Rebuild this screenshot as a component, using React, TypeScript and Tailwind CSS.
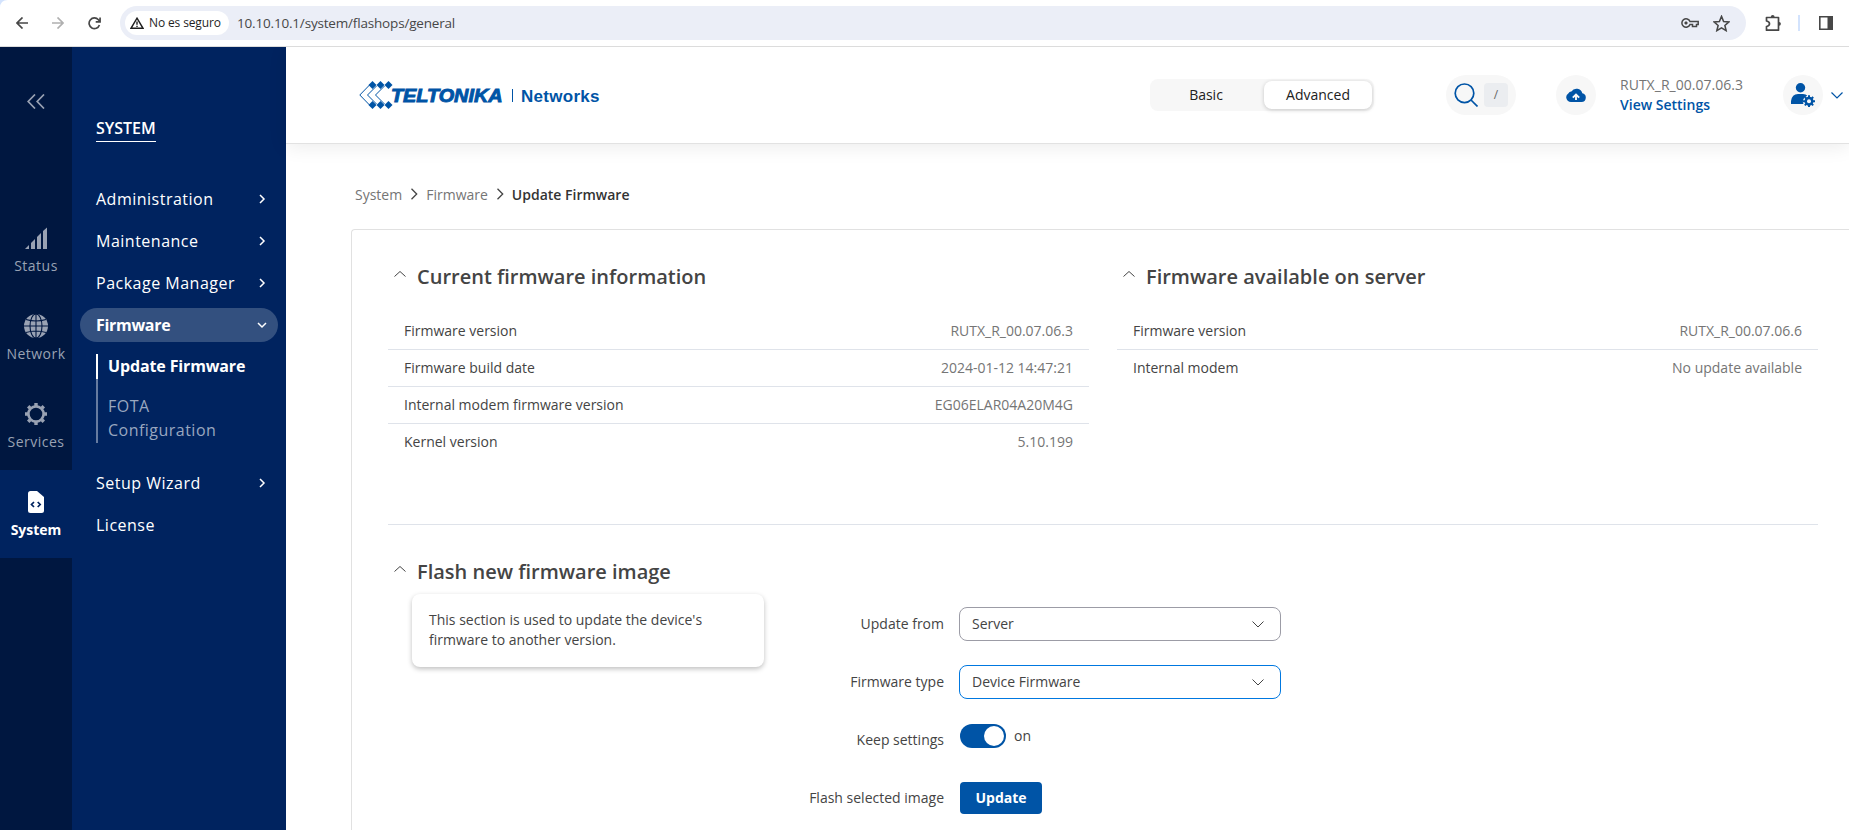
import React from "react";

type IconProps = { className?: string };

const Chevron = ({ d, size = "size-3", w = 1.5 }: { d: string; size?: string; w?: number }) => (
  <svg viewBox="0 0 12 12" className={`${size} shrink-0`} fill="none" stroke="currentColor" strokeWidth={w}>
    <path d={d} />
  </svg>
);
const RIGHT = "M4 2 8 6 4 10";
const DOWN = "M2 4 6 8 10 4";

const LogoMark = ({ className }: IconProps) => (
  <svg viewBox="0 0 34 28" className={className} fill="none" stroke="#0054a6" strokeWidth="1">
    <path d="M12 2.500 .8 14 12 25.500M17.500 5 8.500 14 17.500 23M25.500 5 16.500 14 25.500 23" />
    <path d="M13.500 0l4 4-4 4-4-4zM21.500 0l4 4-4 4-4-4zM29.500 0l4 4-4 4-4-4zM13.500 20l4 4-4 4-4-4zM21.500 20l4 4-4 4-4-4zM29.500 20l4 4-4 4-4-4z" fill="#0054a6" stroke="none" />
  </svg>
);

const StatusIcon = () => (
  <svg viewBox="0 0 22 22" className="size-[22px]" fill="currentColor">
    <path d="M0 22 4 18V22zM6 16 10 12V22H6zM12 10 16 6V22H12zM18 4 22 .5V22H18z" />
  </svg>
);
const NetworkIcon = () => (
  <svg viewBox="0 0 24 24" className="size-6">
    <circle cx="12" cy="12" r="12" fill="currentColor" />
    <g fill="none" stroke="#001740" strokeWidth="1.100">
      <ellipse cx="12" cy="12" rx="6" ry="12" />
      <path d="M12 0V24M0 12H24M2 5.500Q12 8.500 22 5.500M2 18.500Q12 15.500 22 18.500" />
    </g>
  </svg>
);
const ServicesIcon = () => (
  <svg viewBox="0 0 22 22" className="size-[22px]" fill="none" stroke="currentColor">
    <circle cx="11" cy="11" r="7.600" strokeWidth="2.600" />
    <path d="M11 0V3M11 19V22M0 11H3M19 11H22M3.200 3.200 5.200 5.200M16.800 16.800 18.800 18.800M3.200 18.800 5.200 16.800M16.800 5.200 18.800 3.200" strokeWidth="3.400" />
  </svg>
);
const SystemIcon = () => (
  <svg viewBox="0 0 16 22" className="h-[22px] w-4">
    <path d="M2.500 0H9L16 6V19.500Q16 22 13.500 22H2.500Q0 22 0 19.500V2.500Q0 0 2.500 0z" fill="currentColor" />
    <path d="M6 11 3.500 13.500 6 16M9.700 11 12.200 13.500 9.700 16" fill="none" stroke="#00235f" strokeWidth="1.700" />
  </svg>
);

const rail = [
  { label: "Status", icon: <StatusIcon /> },
  { label: "Network", icon: <NetworkIcon /> },
  { label: "Services", icon: <ServicesIcon /> },
  { label: "System", icon: <SystemIcon />, active: true },
];

const BrowserBar = () => (
  <div className="relative flex h-[47px] shrink-0 items-center border-b border-[#dcdcdc] bg-white text-[#474747]">
    <svg viewBox="0 0 8 8" className="absolute top-0 left-0 size-2"><path d="M0 0H8Q0 0 0 8z" fill="#d3e3fd" /></svg>
    <svg viewBox="0 0 12 12" className="ml-4 size-3" fill="none" stroke="currentColor" strokeWidth="1.700"><path d="M12 6H1M6.500.500 1 6 6.500 11.500" /></svg>
    <svg viewBox="0 0 12 12" className="ml-6 size-3 text-[#b0b0b0]" fill="none" stroke="currentColor" strokeWidth="1.700"><path d="M0 6H11M5.500.500 11 6 5.500 11.500" /></svg>
    <svg viewBox="0 0 14 14" className="ml-6 size-[13px]" fill="none" stroke="currentColor" strokeWidth="1.800"><path d="M12.300 8.500A5.700 5.700 0 1 1 11.200 3L12.800 4.700M13 .5V5.200H8.300" /></svg>
    <div className="ml-[19px] flex h-[34px] w-[1626px] items-center rounded-full bg-[#ebeef7] pl-[5px] pr-[16px]">
      <div className="flex h-6 w-[104px] items-center rounded-full bg-white pl-[5px] text-[#1f1f1f]">
        <svg viewBox="0 0 14 12" className="h-3 w-3.5" fill="none" stroke="currentColor" strokeWidth="1.400"><path d="M7 1.200 13 11.300H1zM7 4.500V7.800M7 8.700V10" /></svg>
        <span className="ml-[5px] whitespace-nowrap text-[12px] font-medium tracking-[-0.130px]">No es seguro</span>
      </div>
      <span className="ml-[8px] whitespace-nowrap text-[13.500px] tracking-[-0.180px]">10.10.10.1/system/flashops/general</span>
      <svg viewBox="0 0 18 10" className="ml-auto h-2.5 w-[18px]" fill="none" stroke="currentColor" strokeWidth="1.500">
        <path d="M9 3.500A4.200 4.200 0 1 0 9 6.500H11.500V8.500H15.500V6.500H17.200V3.500z" /><circle cx="5" cy="5" r="1.300" fill="currentColor" strokeWidth=".6" />
      </svg>
      <svg viewBox="0 0 24 24" className="ml-[14px] size-[17px]" fill="none" stroke="currentColor" strokeWidth="2.200"><path d="M12 2 15 9.200 22.500 9.800 16.800 14.700 18.500 22 12 18.100 5.500 22 7.200 14.700 1.500 9.800 9 9.200z" /></svg>
    </div>
    <svg viewBox="0 0 17 18" className="ml-[19px] h-[18px] w-[17px]" fill="none" stroke="currentColor" strokeWidth="1.700">
      <path d="M1.500 3.500H13.500V16.200H1.500V12.500Q4.500 12 4.500 9.800 4.500 7.500 1.500 7z" strokeLinejoin="round" />
      <path d="M5.800 3A1.900 1.900 0 0 1 9.600 3zM14 7.900A1.900 1.900 0 0 1 14 11.700z" fill="currentColor" stroke="none" />
    </svg>
    <div className="ml-[16px] h-4 w-0.5 bg-[#d3e3fd]" />
    <svg viewBox="0 0 14 14" className="ml-[19px] size-3.5"><path d="M.800.800H13.200V13.200H.800z" fill="none" stroke="currentColor" strokeWidth="1.600" /><path d="M8.500 0H14V14H8.500z" fill="currentColor" /></svg>
  </div>
);

const NavItem = ({ label, plain }: { label: string; plain?: boolean }) => (
  <div className="flex h-[42px] items-center justify-between pr-[18px] pl-6 text-white">
    <span className="text-[16px] tracking-[0.500px]">{label}</span>
    {!plain && <Chevron d={RIGHT} />}
  </div>
);

const Sidebar = () => (
  <aside className="flex shrink-0">
    <div className="flex w-[72px] flex-col bg-[#001740] text-[#99a2b3]">
      <div className="flex h-[159px] justify-center pt-[47px]">
        <svg viewBox="0 0 18 15" className="h-[15px] w-[18px]" fill="none" stroke="currentColor" strokeWidth="1.700"><path d="M8 .500 1.200 7.500 8 14.500M17 .500 10.200 7.500 17 14.500" /></svg>
      </div>
      {rail.map((r) => (
        <div key={r.label} className={`flex h-[88px] flex-col items-center ${r.active ? "bg-[#00235f] font-bold text-white" : "tracking-[0.500px]"}`}>
          <div className="mt-[20px] flex h-[24px] items-center">{r.icon}</div>
          <span className="mt-[6px] text-[14px] leading-5">{r.label}</span>
        </div>
      ))}
    </div>
    <nav className="w-[214px] bg-[#00235f] pt-[67px]">
      <div className="ml-6 h-[28px] w-[60px] whitespace-nowrap border-b border-white text-[16px] leading-7 font-semibold text-white">SYSTEM</div>
      <div className="mt-[36px]">
        <NavItem label="Administration" />
        <NavItem label="Maintenance" />
        <NavItem label="Package Manager" />
        <div className="mx-2 my-1 flex h-[34px] items-center justify-between rounded-full bg-[#33507f] pr-[10px] pl-4 text-white">
          <span className="text-[16px] font-bold tracking-[-0.300px]">Firmware</span>
          <Chevron d={DOWN} />
        </div>
        <div className="mt-[12px] mb-[19px] ml-6 h-[89px]">
          <div className="flex h-[25px] items-center whitespace-nowrap border-l-2 border-white pb-[2px] pl-[10px] text-[16px] font-bold tracking-[-0.130px] text-white">Update Firmware</div>
          <div className="h-16 border-l-2 border-[#667ba0] pt-[15px] pl-[10px] text-[16px] leading-6 tracking-[0.480px] text-[#99a7bf]">FOTA<br />Configuration</div>
        </div>
        <NavItem label="Setup Wizard" />
        <NavItem label="License" plain />
      </div>
    </nav>
  </aside>
);

const Header = () => (
  <header className="flex h-[97px] shrink-0 items-center border-b border-[#e2e2e2] bg-white pl-[73px] shadow-[0_3px_18px_rgba(0,0,0,0.080)]">
    <LogoMark className="h-7 w-[34px]" />
    <span className="-ml-[3px] w-[115px] font-['Liberation_Sans'] text-[18px] leading-none font-black italic text-[#0054a6]">
      <svg viewBox="0 0 115 20" className="h-5 w-[115px] overflow-visible"><text x="1" y="17" textLength="111.500" lengthAdjust="spacingAndGlyphs" fill="#0054a6" stroke="#0054a6" strokeWidth=".9">TELTONIKA</text></svg>
    </span>
    <div className="mt-px ml-[7px] h-[13px] w-px bg-[#0054a6]" />
    <span className="mt-[3px] ml-[8px] font-['Liberation_Sans'] text-[17px] font-bold tracking-[0.280px] text-[#0054a6]">Networks</span>
    <div className="ml-auto flex items-center">
      <div className="mr-[72px] flex h-8 w-[224px] items-center rounded-lg bg-[#f7f7f7] text-[14px] text-[#212121]">
        <span className="w-[114px] pr-0.5 pb-0.5 text-center">Basic</span>
        <span className="flex h-7 w-[108px] items-center justify-center rounded-lg bg-white pb-0.5 shadow-[0_1px_4px_rgba(0,0,0,0.200)]">Advanced</span>
      </div>
      <div className="mr-[40px] flex h-10 w-[70px] items-center rounded-full bg-[#f7f7f7] pl-2">
        <svg viewBox="0 0 24 24" className="size-6" fill="none" stroke="#0054a6" strokeWidth="1.700"><circle cx="10.500" cy="10.300" r="9.300" /><path d="M17 17 23.500 23.500" /></svg>
        <span className="ml-[6px] flex h-6 w-6 items-center justify-center rounded bg-[#ebedf0] text-[12px] text-[#666]">/</span>
      </div>
      <div className="mr-[24px] flex size-10 items-center justify-center rounded-full bg-[#f7f7f7]">
        <svg viewBox="0 0 20 14" className="h-3.5 w-5"><path d="M5 14A4.700 4.700 0 0 1 2.500 5.300 3 3 0 0 1 5.400 3.500 6 6 0 0 1 16.300 5.300 4.400 4.400 0 0 1 15.500 14z" fill="#0054a6" /><path d="M10 12V7M6.800 9.700 10 6.500 13.200 9.700" fill="none" stroke="#f7f7f7" strokeWidth="1.900" /></svg>
      </div>
      <div className="w-[163px] text-[14px] leading-5">
        <div className="tracking-[0.020px] text-[#757575]">RUTX_R_00.07.06.3</div>
        <div className="font-semibold text-[#0054a6]">View Settings</div>
      </div>
      <div className="mr-[8px] flex size-10 items-center justify-center rounded-full bg-[#f7f7f7]">
        <svg viewBox="0 0 24 24" className="size-6" fill="#0054a6"><circle cx="9.500" cy="4.700" r="4.700" /><path d="M0 21V18Q1 11 7 11H12Q15 11 16.300 12.700A6 6 0 0 0 12.500 21z" /><circle cx="18" cy="18.200" r="3.200" fill="none" stroke="#0054a6" strokeWidth="2.600" /><path d="M18 12.200V24.200M12 18.200H24M13.800 14 22.200 22.400M22.200 14 13.800 22.400" stroke="#0054a6" strokeWidth="2" /><circle cx="18" cy="18.200" r="2" fill="#f7f7f7" /></svg>
      </div>
      <span className="mr-[6px] text-[#0054a6]"><Chevron d="M.5 3.500 6 9 11.500 3.500" w={1.2} /></span>
    </div>
  </header>
);

const Title = ({ children }: { children: React.ReactNode }) => (
  <div className="flex h-7 items-center text-[#444]">
    <span className="mb-[6px] ml-[6px] mr-[11px]"><Chevron d="M.5 8.500 6 3.500 11.500 8.500" w={1} /></span>
    <h2 className="text-[20px] font-semibold whitespace-nowrap">{children}</h2>
  </div>
);

const InfoTable = ({ title, rows }: { title: string; rows: [string, string][] }) => (
  <section className="w-[701px]">
    <Title>{title}</Title>
    <div className="mt-[22px]">
      {rows.map(([k, v], i) => (
        <div key={k} className={`flex h-[37px] items-center justify-between px-4 pb-[2px] text-[14px] ${i < rows.length - 1 ? "border-b border-[#dfe3ea]" : ""}`}>
          <span className="text-[#444]">{k}</span>
          <span className="text-[#757575]">{v}</span>
        </div>
      ))}
    </div>
  </section>
);

const Select = ({ value, active }: { value: string; active?: boolean }) => (
  <div className={`flex h-[34px] w-[322px] items-center justify-between rounded-lg border pr-[16px] pl-[12px] text-[#444] ${active ? "border-[#0078e0]" : "border-[#9c9ca6]"}`}>
    <span className="pb-px">{value}</span>
    <Chevron d="M.5 3.500 6 9 11.500 3.500" w={1} />
  </div>
);

const Field = ({ label, children }: { label: string; children: React.ReactNode }) => (
  <div className="flex h-[58px] items-start">
    <span className="w-[180px] text-right leading-[34px]">{label}</span>
    <div className="ml-[15px]">{children}</div>
  </div>
);

export default function App() {
  return (
    <div className="flex h-[830px] w-[1849px] flex-col overflow-hidden bg-white font-['Open_Sans','Noto_Sans',sans-serif]">
      <BrowserBar />
      <div className="flex min-h-0 flex-1">
        <Sidebar />
        <main className="flex min-w-0 flex-1 flex-col">
          <Header />
          <div className="mt-[40px] ml-[69px] flex h-5 shrink-0 items-center text-[14px] text-[#757575]">
            <span>System</span>
            <span className="mx-[6px] text-[#444]"><Chevron d="M3.500 .800 8.700 6 3.500 11.200" w={1.3} /></span>
            <span>Firmware</span>
            <span className="mx-[6px] text-[#444]"><Chevron d="M3.500 .800 8.700 6 3.500 11.200" w={1.3} /></span>
            <span className="font-semibold text-[#333]">Update Firmware</span>
          </div>
          <div className="mt-[25px] ml-[65px] min-h-0 flex-1 rounded-tl border-t border-l border-[#e1e1e1] pt-[33px] pl-9">
            <div className="flex h-[262px] w-[1430px] justify-between border-b border-[#dfe3ea]">
              <InfoTable title="Current firmware information" rows={[["Firmware version", "RUTX_R_00.07.06.3"], ["Firmware build date", "2024-01-12 14:47:21"], ["Internal modem firmware version", "EG06ELAR04A20M4G"], ["Kernel version", "5.10.199"]]} />
              <InfoTable title="Firmware available on server" rows={[["Firmware version", "RUTX_R_00.07.06.6"], ["Internal modem", "No update available"]]} />
            </div>
            <div className="mt-[33px]">
              <Title>Flash new firmware image</Title>
              <div className="flex text-[14px] text-[#444]">
                <div className="mt-[8px] ml-6 h-[73px] w-[352px] rounded-lg bg-white pr-4 pl-[17px] pt-[16px] leading-5 shadow-[0_2px_5px_rgba(0,0,0,0.250)]">
                  This section is used to update the device&apos;s firmware to another version.
                </div>
                <div className="mt-[21px]">
                  <Field label="Update from"><Select value="Server" /></Field>
                  <Field label="Firmware type"><Select value="Device Firmware" active /></Field>
                  <Field label="Keep settings">
                    <div className="flex items-center pt-px pl-px">
                      <span className="flex h-6 w-[46px] items-center justify-end rounded-full bg-[#0054a6] pr-0.5"><span className="size-5 rounded-full bg-white" /></span>
                      <span className="ml-[8px] pb-[2px]">on</span>
                    </div>
                  </Field>
                  <Field label="Flash selected image">
                    <div className="mt-px ml-px flex h-8 w-[82px] items-center justify-center rounded bg-[#0054a6] pb-[2px] font-bold text-white">Update</div>
                  </Field>
                </div>
              </div>
            </div>
          </div>
        </main>
      </div>
    </div>
  );
}
